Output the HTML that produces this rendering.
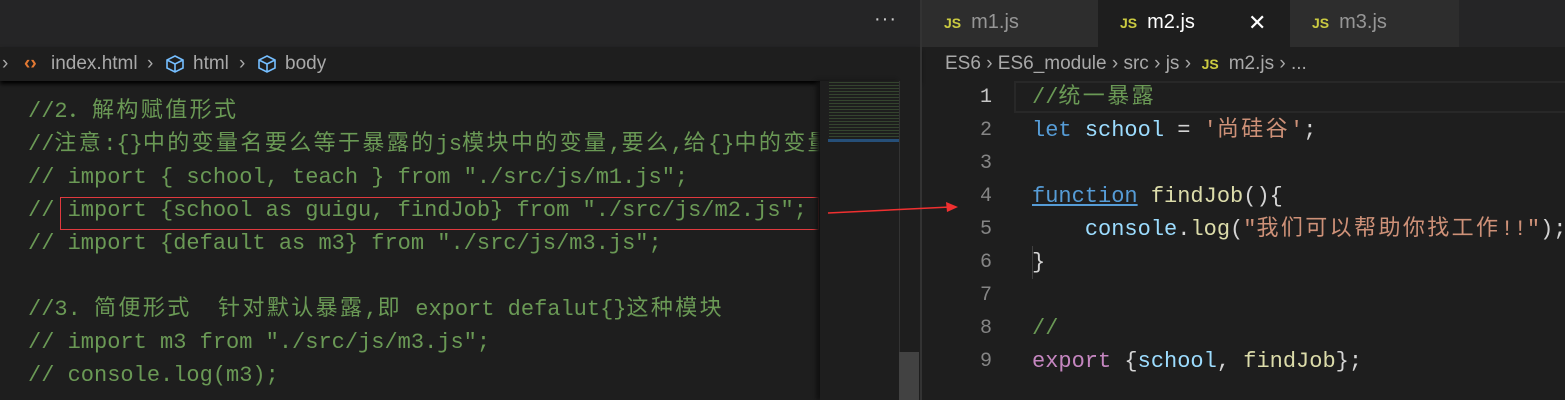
<!DOCTYPE html>
<html><head><meta charset="utf-8"><style>
*{margin:0;padding:0;box-sizing:border-box}
body{width:1565px;height:400px;background:#1e1e1e;overflow:hidden;position:relative;font-family:"Liberation Sans","Noto Sans CJK SC",sans-serif}
.abs{position:absolute}
.code{font-family:"Liberation Mono","Noto Sans CJK SC",monospace;font-size:22px;white-space:pre;line-height:33px}
.z{letter-spacing:2.4px}
.c{color:#6a9955}
.ln{color:#858585;font-family:"Liberation Mono",monospace;font-size:20px;width:40px;text-align:right;line-height:33px}
.tab{position:absolute;top:0;height:47px;background:#2d2d2d;color:#969696;font-size:20px;line-height:45px}
.js{color:#cbcb41;font-weight:bold;font-size:14px;margin-right:10px}
.bc{color:#a9a9a9;font-size:19px;line-height:34px}
</style></head><body>
<div class="abs" style="left:0;top:0;width:920px;height:47px;background:#252526"></div>
<div class="abs" style="left:874px;top:8px;color:#ccc;font-size:20px;letter-spacing:1px">···</div>
<div class="abs bc" style="left:0;top:47px;width:920px;height:34px;background:#1e1e1e;box-shadow:0 3px 4px #000">
<span style="position:absolute;left:2px">›</span>
<span style="position:absolute;left:24px;color:#e37933;font-weight:bold">‹›</span>
<span style="position:absolute;left:51px">index.html</span>
<span style="position:absolute;left:147px">›</span>
<svg class="abs" style="left:165px;top:8px" width="20" height="18" viewBox="0 0 20 18"><path d="M10 1L18 5V13L10 17L2 13V5Z M2 5L10 9L18 5 M10 9V17" fill="none" stroke="#75beff" stroke-width="1.6"/></svg>
<span style="position:absolute;left:193px">html</span>
<span style="position:absolute;left:239px">›</span>
<svg class="abs" style="left:257px;top:8px" width="20" height="18" viewBox="0 0 20 18"><path d="M10 1L18 5V13L10 17L2 13V5Z M2 5L10 9L18 5 M10 9V17" fill="none" stroke="#75beff" stroke-width="1.6"/></svg>
<span style="position:absolute;left:285px">body</span>
</div>
<div class="abs code c" style="left:28px;top:95px">//2<span class="z">．解构赋值形式</span>
//<span class="z">注意</span>:{}<span class="z">中的变量名要么等于暴露的</span>js<span class="z">模块中的变量</span>,<span class="z">要么</span>,<span class="z">给</span>{}<span class="z">中的变量</span>
// import { school, teach } from "./src/js/m1.js";
// import {school as guigu, findJob} from "./src/js/m2.js";
// import {default as m3} from "./src/js/m3.js";

//3. <span class="z">简便形式</span>  <span class="z">针对默认暴露</span>,<span class="z">即</span> export defalut{}<span class="z">这种模块</span>
// import m3 from "./src/js/m3.js";
// console.log(m3);</div>
<div class="abs" style="left:60px;top:197px;width:759px;height:33px;border:1px solid #e0393e"></div>
<div class="abs" style="left:820px;top:81px;width:80px;height:319px;background:#1e1e1e;box-shadow:-4px 0 4px #111"></div>
<div class="abs" style="left:829px;top:80px;width:70px;height:60px;opacity:.5;background:repeating-linear-gradient(#1e1e1e 0 2px,#4a6a3e 2px 3px)"></div>
<div class="abs" style="left:828px;top:139px;width:71px;height:3px;background:#264f78"></div>
<div class="abs" style="left:899px;top:81px;width:21px;height:319px;background:#1e1e1e;border-left:1px solid #333"></div>
<div class="abs" style="left:899px;top:352px;width:20px;height:48px;background:#424242"></div>
<div class="abs" style="left:920px;top:0;width:2px;height:400px;background:#333"></div>
<div class="abs" style="left:922px;top:0;width:643px;height:47px;background:#252526"></div>
<div class="tab" style="left:922px;width:176px;padding-left:22px"><span class="js">JS</span>m1.js</div>
<div class="tab" style="left:1098px;width:192px;padding-left:22px;background:#1e1e1e;color:#fff"><span class="js">JS</span>m2.js<span style="position:absolute;left:150px;top:0;font-size:22px">✕</span></div>
<div class="tab" style="left:1290px;width:169px;padding-left:22px"><span class="js">JS</span>m3.js</div>
<div class="abs bc" style="left:945px;top:47px">ES6 › ES6_module › src › js › &nbsp;<span class="js">JS</span>m2.js › ...</div>
<div class="abs" style="left:1014px;top:81px;width:551px;height:32px;border:2px solid #282828;border-right:none"></div>
<div class="abs" style="left:952px;top:81px">
<div class="ln" style="color:#c6c6c6">1</div><div class="ln">2</div><div class="ln">3</div><div class="ln">4</div><div class="ln">5</div><div class="ln">6</div><div class="ln">7</div><div class="ln">8</div><div class="ln">9</div>
</div>
<div class="abs" style="left:1032px;top:246px;width:1px;height:33px;background:#404040"></div>
<div class="abs code" style="left:1032px;top:81px;color:#d4d4d4"><span class="c">//<span class="z">统一暴露</span></span>
<span style="color:#569cd6">let</span> <span style="color:#9cdcfe">school</span> = <span style="color:#ce9178">'<span class="z">尚硅谷</span>'</span>;

<span style="color:#569cd6;text-decoration:underline">function</span> <span style="color:#dcdcaa">findJob</span>(){
    <span style="color:#9cdcfe">console</span>.<span style="color:#dcdcaa">log</span>(<span style="color:#ce9178">"<span class="z">我们可以帮助你找工作</span>!!"</span>);
}

<span class="c">//</span>
<span style="color:#c586c0">export</span> {<span style="color:#9cdcfe">school</span>, <span style="color:#dcdcaa">findJob</span>};</div>
<svg class="abs" style="left:0;top:0" width="1565" height="400"><line x1="828" y1="213" x2="950" y2="207" stroke="#f03030" stroke-width="1.5"/><path d="M958 207L946 202L947 212Z" fill="#f03030"/></svg>
</body></html>
